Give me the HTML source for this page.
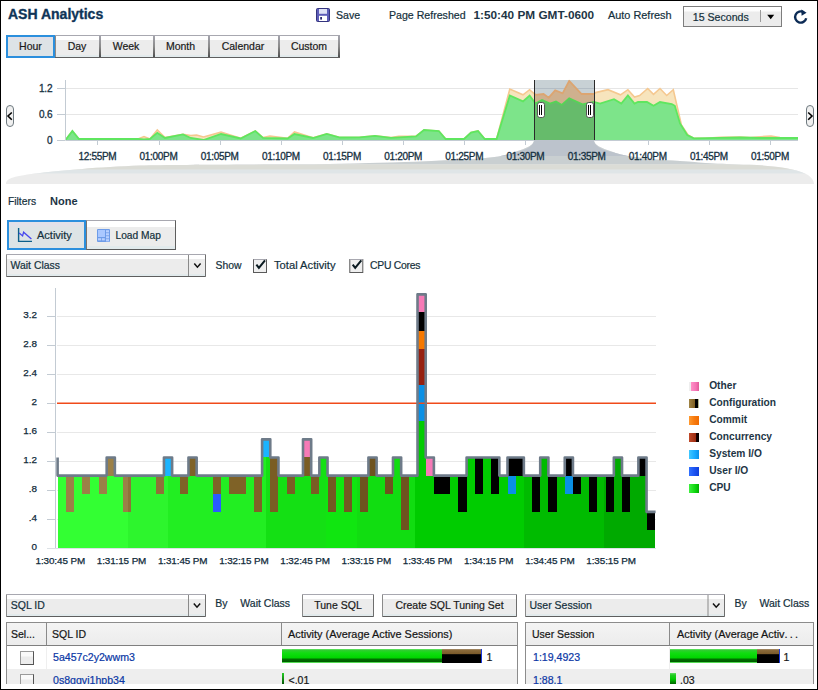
<!DOCTYPE html>
<html><head><meta charset="utf-8"><title>ASH Analytics</title>
<style>
html,body{margin:0;padding:0;background:#fff;}
body{width:818px;height:690px;position:relative;overflow:hidden;font-family:"Liberation Sans", sans-serif;}
.t{position:absolute;white-space:nowrap;line-height:normal;}
.box{position:absolute;box-sizing:content-box;}
svg.g{position:absolute;left:0;top:0;}
#frame{position:absolute;left:0;top:0;width:816px;height:688px;border:1px solid #000;pointer-events:none;}
</style></head><body>
<div class="box" style="left:683px;top:6px;width:97px;height:19px;border:1px solid #7d7d7d;background:linear-gradient(#ffffff 0,#fdfdfd 4px,#ececec 5px,#ececec 100%);"></div><div class="box" style="left:55px;top:35px;width:285px;height:21px;border-top:1px solid #a8a8b0;border-bottom:1px solid #5e5e5e;background:linear-gradient(#ffffff 0,#ffffff 4px,#ececec 4px,#ececec 19px,#e2eaec 19px,#e2eaec 100%);"></div><div class="box" style="left:6px;top:35px;width:45px;height:19px;border:2px solid #2b8fdd;background:linear-gradient(#e0dfe7 0,#e0dfe7 3px,#dde3e6 3px,#dde3e6 100%);"></div><div class="box" style="left:99px;top:36px;width:2px;height:21px;background:linear-gradient(#a4a4ac,#8a8a8a 50%,#505050)"></div><div class="box" style="left:153px;top:36px;width:2px;height:21px;background:linear-gradient(#a4a4ac,#8a8a8a 50%,#505050)"></div><div class="box" style="left:208px;top:36px;width:2px;height:21px;background:linear-gradient(#a4a4ac,#8a8a8a 50%,#505050)"></div><div class="box" style="left:278px;top:36px;width:2px;height:21px;background:linear-gradient(#a4a4ac,#8a8a8a 50%,#505050)"></div><div class="box" style="left:338px;top:36px;width:2px;height:21px;background:linear-gradient(#a4a4ac,#8a8a8a 50%,#505050)"></div><div class="box" style="left:55px;top:36px;width:1px;height:21px;background:#8f8a86"></div><div class="box" style="left:7px;top:220px;width:75px;height:26px;border:2px solid #2b8fdd;background:linear-gradient(#e1e1e9 0,#e1e1e9 4px,#dde4e6 5px,#dde4e6 100%);"></div><div class="box" style="left:86px;top:220px;width:88px;height:28px;border-top:1px solid #a8a8b0;border-left:1px solid #7a7470;border-right:1px solid #5e5e5e;border-bottom:1px solid #5a5a5a;background:linear-gradient(#ffffff 0,#ffffff 6px,#ececec 6px,#ececec 25px,#e2eaec 25px,#e2eaec 100%);"></div><div class="box" style="left:6px;top:254px;width:198px;height:21px;border:1px solid #8a8a8a;border-top-color:#a8a8b0;border-right-color:#6e6e6e;border-bottom-color:#5e5e5e;border-radius:1px;background:linear-gradient(#ffffff 0,#ffffff 4px,#ececec 4px,#ececec calc(100% - 2px),#e2eaec calc(100% - 2px));"></div><div class="box" style="left:6px;top:594px;width:198px;height:21px;border:1px solid #8a8a8a;border-top-color:#a8a8b0;border-right-color:#6e6e6e;border-bottom-color:#5e5e5e;border-radius:1px;background:linear-gradient(#ffffff 0,#ffffff 4px,#ececec 4px,#ececec calc(100% - 2px),#e2eaec calc(100% - 2px));"></div><div class="box" style="left:302px;top:594px;width:70px;height:21px;border:1px solid #8a8a8a;border-top-color:#a8a8b0;border-right-color:#6e6e6e;border-bottom-color:#5e5e5e;border-radius:1px;background:linear-gradient(#ffffff 0,#ffffff 4px,#ececec 4px,#ececec calc(100% - 2px),#e2eaec calc(100% - 2px));"></div><div class="box" style="left:382px;top:594px;width:133px;height:21px;border:1px solid #8a8a8a;border-top-color:#a8a8b0;border-right-color:#6e6e6e;border-bottom-color:#5e5e5e;border-radius:1px;background:linear-gradient(#ffffff 0,#ffffff 4px,#ececec 4px,#ececec calc(100% - 2px),#e2eaec calc(100% - 2px));"></div><div class="box" style="left:525px;top:594px;width:198px;height:21px;border:1px solid #8a8a8a;border-top-color:#a8a8b0;border-right-color:#6e6e6e;border-bottom-color:#5e5e5e;border-radius:1px;background:linear-gradient(#ffffff 0,#ffffff 4px,#ececec 4px,#ececec calc(100% - 2px),#e2eaec calc(100% - 2px));"></div>
<svg class="g" width="818" height="690" viewBox="0 0 818 690" shape-rendering="auto">
<defs><linearGradient id="lg0" x1="0" x2="1" y1="0" y2="0"><stop offset="0" stop-color="#eeeeee"/><stop offset="0.2" stop-color="#eeeeee"/><stop offset="0.2" stop-color="#ff90c8"/><stop offset="0.7" stop-color="#f474b4"/><stop offset="1" stop-color="#e05a98"/></linearGradient><linearGradient id="lg1" x1="0" x2="1" y1="0" y2="0"><stop offset="0" stop-color="#a08444"/><stop offset="0.6" stop-color="#7e5e22"/><stop offset="0.6" stop-color="#000"/><stop offset="0.9" stop-color="#000"/><stop offset="0.9" stop-color="#b8b890"/><stop offset="1" stop-color="#b8b890"/></linearGradient><linearGradient id="lg2" x1="0" x2="1" y1="0" y2="0"><stop offset="0" stop-color="#ff9a30"/><stop offset="0.5" stop-color="#f77c10"/><stop offset="1" stop-color="#f06a00"/></linearGradient><linearGradient id="lg3" x1="0" x2="1" y1="0" y2="0"><stop offset="0" stop-color="#c04a2a"/><stop offset="0.7" stop-color="#9a2a10"/><stop offset="0.7" stop-color="#200000"/><stop offset="1" stop-color="#000"/></linearGradient><linearGradient id="lg4" x1="0" x2="1" y1="0" y2="0"><stop offset="0" stop-color="#40c8ff"/><stop offset="0.6" stop-color="#18aaff"/><stop offset="1" stop-color="#0a90e8"/></linearGradient><linearGradient id="lg5" x1="0" x2="1" y1="0" y2="0"><stop offset="0" stop-color="#3070ff"/><stop offset="0.6" stop-color="#1a50f0"/><stop offset="1" stop-color="#1040d8"/></linearGradient><linearGradient id="lg6" x1="0" x2="1" y1="0" y2="0"><stop offset="0" stop-color="#40f040"/><stop offset="0.6" stop-color="#10d810"/><stop offset="1" stop-color="#00b000"/></linearGradient></defs><g>
<rect x="316.5" y="8.5" width="13" height="13" rx="1" fill="#5d5db8" stroke="#34347e" stroke-width="1"/>
<rect x="319" y="9" width="8" height="4.8" fill="#dfe2f6"/>
<rect x="319" y="15.8" width="8" height="5.2" fill="#ffffff"/>
<rect x="320.2" y="17" width="1.8" height="2.6" fill="#2a2a70"/>
</g><line x1="760.5" y1="10" x2="760.5" y2="22" stroke="#9a9a9a" stroke-width="1" /><path d="M767.2 14.8 L774.2 14.8 L770.7 19.2 Z" fill="#000"/><path d="M 806.2 18.2 A 5.6 5.6 0 1 1 803.8 12.3" fill="none" stroke="#0c2b55" stroke-width="2.4"/><path d="M 801.3 9.6 L 806.6 12.8 L 801.6 15.8 Z" fill="#0c2b55"/><line x1="65.5" y1="88.5" x2="798" y2="88.5" stroke="#e6e6e6" stroke-width="1" /><line x1="65.5" y1="114.5" x2="798" y2="114.5" stroke="#e6e6e6" stroke-width="1" /><line x1="57" y1="88.5" x2="65" y2="88.5" stroke="#c3cbd3" stroke-width="1" /><line x1="57" y1="114.5" x2="65" y2="114.5" stroke="#c3cbd3" stroke-width="1" /><line x1="57" y1="140.5" x2="65" y2="140.5" stroke="#c3cbd3" stroke-width="1" /><line x1="97.5" y1="140" x2="97.5" y2="145" stroke="#c3cbd3" stroke-width="1" /><line x1="159.5" y1="140" x2="159.5" y2="145" stroke="#c3cbd3" stroke-width="1" /><line x1="220.5" y1="140" x2="220.5" y2="145" stroke="#c3cbd3" stroke-width="1" /><line x1="281.5" y1="140" x2="281.5" y2="145" stroke="#c3cbd3" stroke-width="1" /><line x1="342.5" y1="140" x2="342.5" y2="145" stroke="#c3cbd3" stroke-width="1" /><line x1="403.5" y1="140" x2="403.5" y2="145" stroke="#c3cbd3" stroke-width="1" /><line x1="464.5" y1="140" x2="464.5" y2="145" stroke="#c3cbd3" stroke-width="1" /><line x1="525.5" y1="140" x2="525.5" y2="145" stroke="#c3cbd3" stroke-width="1" /><line x1="587.5" y1="140" x2="587.5" y2="145" stroke="#c3cbd3" stroke-width="1" /><line x1="648.5" y1="140" x2="648.5" y2="145" stroke="#c3cbd3" stroke-width="1" /><line x1="709.5" y1="140" x2="709.5" y2="145" stroke="#c3cbd3" stroke-width="1" /><line x1="770.5" y1="140" x2="770.5" y2="145" stroke="#c3cbd3" stroke-width="1" /><path d="M65.5 140.0 L72.4 131.0 L79.0 139.5 L138.0 139.0 L144.0 136.5 L150.0 139.0 L157.3 130.0 L165.0 137.5 L183.0 134.4 L190.8 135.5 L196.6 135.0 L203.5 137.0 L221.0 132.2 L240.7 138.2 L255.3 131.0 L263.0 137.5 L270.0 136.0 L287.6 138.3 L294.5 132.0 L313.0 137.8 L326.8 133.8 L340.0 137.5 L359.6 137.4 L375.0 135.8 L391.0 137.6 L398.7 136.4 L416.0 136.2 L424.0 130.0 L438.8 131.0 L445.7 139.0 L464.0 139.0 L471.0 132.5 L478.0 131.0 L484.8 139.0 L496.6 139.0 L509.8 89.0 L523.0 94.8 L529.6 89.7 L535.5 94.8 L543.5 94.0 L548.7 97.7 L555.2 90.4 L562.6 93.3 L569.2 80.9 L581.6 94.0 L594.0 94.0 L595.6 92.6 L608.0 89.7 L620.5 94.8 L627.9 89.7 L634.5 97.0 L639.6 95.5 L647.7 88.5 L653.5 94.4 L660.0 88.5 L666.7 95.5 L673.3 89.7 L676.0 101.4 L681.4 125.0 L688.0 135.0 L693.8 138.3 L705.6 138.3 L720.0 137.3 L740.0 137.0 L750.0 137.5 L771.0 136.0 L780.0 137.5 L798.0 138.0 L798.0 140 L65.5 140 Z" fill="#f7e4bd"/><path d="M65.5 140.0 L72.4 131.0 L79.0 139.5 L138.0 139.0 L144.0 136.5 L150.0 139.0 L157.3 130.0 L165.0 137.5 L183.0 134.4 L190.8 135.5 L196.6 135.0 L203.5 137.0 L221.0 132.2 L240.7 138.2 L255.3 131.0 L263.0 137.5 L270.0 136.0 L287.6 138.3 L294.5 132.0 L313.0 137.8 L326.8 133.8 L340.0 137.5 L359.6 137.4 L375.0 135.8 L391.0 137.6 L398.7 136.4 L416.0 136.2 L424.0 130.0 L438.8 131.0 L445.7 139.0 L464.0 139.0 L471.0 132.5 L478.0 131.0 L484.8 139.0 L496.6 139.0 L509.8 89.0 L523.0 94.8 L529.6 89.7 L535.5 94.8 L543.5 94.0 L548.7 97.7 L555.2 90.4 L562.6 93.3 L569.2 80.9 L581.6 94.0 L594.0 94.0 L595.6 92.6 L608.0 89.7 L620.5 94.8 L627.9 89.7 L634.5 97.0 L639.6 95.5 L647.7 88.5 L653.5 94.4 L660.0 88.5 L666.7 95.5 L673.3 89.7 L676.0 101.4 L681.4 125.0 L688.0 135.0 L693.8 138.3 L705.6 138.3 L720.0 137.3 L740.0 137.0 L750.0 137.5 L771.0 136.0 L780.0 137.5 L798.0 138.0" fill="none" stroke="#f5c890" stroke-width="1.6"/><path d="M65.5 140.0 L72.4 131.0 L79.0 139.0 L138.0 139.0 L144.0 139.5 L150.0 139.0 L157.3 132.8 L165.0 138.0 L183.0 134.4 L190.8 138.0 L203.5 140.0 L221.0 134.0 L240.7 138.5 L255.3 131.0 L263.0 137.9 L287.6 138.5 L294.5 134.0 L313.0 138.0 L326.8 134.0 L340.0 137.5 L359.6 137.4 L375.0 135.8 L391.0 137.8 L416.0 136.4 L424.0 130.0 L438.8 131.0 L445.7 139.0 L464.0 139.0 L471.0 132.5 L478.0 131.0 L484.8 139.0 L496.6 139.0 L509.8 95.5 L523.0 101.4 L529.6 95.5 L535.5 103.6 L542.0 100.0 L550.0 103.6 L556.0 101.4 L561.8 105.0 L569.2 98.2 L582.4 104.3 L594.0 102.0 L600.0 103.6 L614.0 99.2 L621.3 103.6 L627.9 95.5 L634.5 103.6 L638.0 102.0 L647.0 102.0 L653.5 105.8 L660.0 102.0 L671.8 104.0 L674.8 105.8 L680.0 123.4 L687.2 135.0 L693.8 138.3 L720.0 137.8 L740.0 137.5 L760.0 138.0 L798.0 138.0 L798.0 140 L65.5 140 Z" fill="#7de48a"/><path d="M65.5 140.0 L72.4 131.0 L79.0 139.0 L138.0 139.0 L144.0 139.5 L150.0 139.0 L157.3 132.8 L165.0 138.0 L183.0 134.4 L190.8 138.0 L203.5 140.0 L221.0 134.0 L240.7 138.5 L255.3 131.0 L263.0 137.9 L287.6 138.5 L294.5 134.0 L313.0 138.0 L326.8 134.0 L340.0 137.5 L359.6 137.4 L375.0 135.8 L391.0 137.8 L416.0 136.4 L424.0 130.0 L438.8 131.0 L445.7 139.0 L464.0 139.0 L471.0 132.5 L478.0 131.0 L484.8 139.0 L496.6 139.0 L509.8 95.5 L523.0 101.4 L529.6 95.5 L535.5 103.6 L542.0 100.0 L550.0 103.6 L556.0 101.4 L561.8 105.0 L569.2 98.2 L582.4 104.3 L594.0 102.0 L600.0 103.6 L614.0 99.2 L621.3 103.6 L627.9 95.5 L634.5 103.6 L638.0 102.0 L647.0 102.0 L653.5 105.8 L660.0 102.0 L671.8 104.0 L674.8 105.8 L680.0 123.4 L687.2 135.0 L693.8 138.3 L720.0 137.8 L740.0 137.5 L760.0 138.0 L798.0 138.0" fill="none" stroke="#5fe65f" stroke-width="1.8"/><line x1="65.5" y1="140.5" x2="798" y2="140.5" stroke="#c3cbd3" stroke-width="1" /><line x1="65.5" y1="80" x2="65.5" y2="140" stroke="#c3cbd3" stroke-width="1" /><clipPath id="lensclip"><path d="M6 184 C 6 178, 14 176, 40 173 C 60 170.5, 100 167, 140 165.5 C 170 164.8, 220 164.5, 300 164.3 C 380 163.5, 440 161, 480 158.5 C 500 157, 510 154, 515 152 C 527 148, 534 145, 534 140 L 594 140 C 594 145, 601 148, 613 152 C 620 155, 640 159, 680 161 C 700 162.5, 715 164, 750 164.8 C 780 166, 800 170, 808 175 C 812 178, 814 181, 814 184 Z"/></clipPath><g clip-path="url(#lensclip)"><rect x="0" y="138" width="818" height="50" fill="#ececec"/><rect x="0" y="138" width="818" height="26.5" fill="#c9cfd1"/><rect x="0" y="164.5" width="818" height="5.2" fill="#dbdcd6"/><rect x="0" y="169.7" width="818" height="3.8" fill="#dfe5e7"/><path d="M470 156 C 505 155, 522 152, 528 148 C 533 145, 534 142, 534 140 L 594 140 C 594 142, 595 145, 600 148 C 606 152, 623 155, 658 156 Z" fill="#bcc3cc"/></g><clipPath id="selclip"><rect x="534.5" y="80" width="60" height="60"/></clipPath><g clip-path="url(#selclip)"><rect x="534" y="80" width="61" height="60" fill="#c8d1d5"/><line x1="534" y1="88.5" x2="595" y2="88.5" stroke="#b3bdc5"/><line x1="534" y1="114.5" x2="595" y2="114.5" stroke="#b3bdc5"/><path d="M65.5 140.0 L72.4 131.0 L79.0 139.5 L138.0 139.0 L144.0 136.5 L150.0 139.0 L157.3 130.0 L165.0 137.5 L183.0 134.4 L190.8 135.5 L196.6 135.0 L203.5 137.0 L221.0 132.2 L240.7 138.2 L255.3 131.0 L263.0 137.5 L270.0 136.0 L287.6 138.3 L294.5 132.0 L313.0 137.8 L326.8 133.8 L340.0 137.5 L359.6 137.4 L375.0 135.8 L391.0 137.6 L398.7 136.4 L416.0 136.2 L424.0 130.0 L438.8 131.0 L445.7 139.0 L464.0 139.0 L471.0 132.5 L478.0 131.0 L484.8 139.0 L496.6 139.0 L509.8 89.0 L523.0 94.8 L529.6 89.7 L535.5 94.8 L543.5 94.0 L548.7 97.7 L555.2 90.4 L562.6 93.3 L569.2 80.9 L581.6 94.0 L594.0 94.0 L595.6 92.6 L608.0 89.7 L620.5 94.8 L627.9 89.7 L634.5 97.0 L639.6 95.5 L647.7 88.5 L653.5 94.4 L660.0 88.5 L666.7 95.5 L673.3 89.7 L676.0 101.4 L681.4 125.0 L688.0 135.0 L693.8 138.3 L705.6 138.3 L720.0 137.3 L740.0 137.0 L750.0 137.5 L771.0 136.0 L780.0 137.5 L798.0 138.0 L798.0 140 L65.5 140 Z" fill="#cfb08e"/><path d="M65.5 140.0 L72.4 131.0 L79.0 139.5 L138.0 139.0 L144.0 136.5 L150.0 139.0 L157.3 130.0 L165.0 137.5 L183.0 134.4 L190.8 135.5 L196.6 135.0 L203.5 137.0 L221.0 132.2 L240.7 138.2 L255.3 131.0 L263.0 137.5 L270.0 136.0 L287.6 138.3 L294.5 132.0 L313.0 137.8 L326.8 133.8 L340.0 137.5 L359.6 137.4 L375.0 135.8 L391.0 137.6 L398.7 136.4 L416.0 136.2 L424.0 130.0 L438.8 131.0 L445.7 139.0 L464.0 139.0 L471.0 132.5 L478.0 131.0 L484.8 139.0 L496.6 139.0 L509.8 89.0 L523.0 94.8 L529.6 89.7 L535.5 94.8 L543.5 94.0 L548.7 97.7 L555.2 90.4 L562.6 93.3 L569.2 80.9 L581.6 94.0 L594.0 94.0 L595.6 92.6 L608.0 89.7 L620.5 94.8 L627.9 89.7 L634.5 97.0 L639.6 95.5 L647.7 88.5 L653.5 94.4 L660.0 88.5 L666.7 95.5 L673.3 89.7 L676.0 101.4 L681.4 125.0 L688.0 135.0 L693.8 138.3 L705.6 138.3 L720.0 137.3 L740.0 137.0 L750.0 137.5 L771.0 136.0 L780.0 137.5 L798.0 138.0" fill="none" stroke="#dca571" stroke-width="1.8"/><path d="M65.5 140.0 L72.4 131.0 L79.0 139.0 L138.0 139.0 L144.0 139.5 L150.0 139.0 L157.3 132.8 L165.0 138.0 L183.0 134.4 L190.8 138.0 L203.5 140.0 L221.0 134.0 L240.7 138.5 L255.3 131.0 L263.0 137.9 L287.6 138.5 L294.5 134.0 L313.0 138.0 L326.8 134.0 L340.0 137.5 L359.6 137.4 L375.0 135.8 L391.0 137.8 L416.0 136.4 L424.0 130.0 L438.8 131.0 L445.7 139.0 L464.0 139.0 L471.0 132.5 L478.0 131.0 L484.8 139.0 L496.6 139.0 L509.8 95.5 L523.0 101.4 L529.6 95.5 L535.5 103.6 L542.0 100.0 L550.0 103.6 L556.0 101.4 L561.8 105.0 L569.2 98.2 L582.4 104.3 L594.0 102.0 L600.0 103.6 L614.0 99.2 L621.3 103.6 L627.9 95.5 L634.5 103.6 L638.0 102.0 L647.0 102.0 L653.5 105.8 L660.0 102.0 L671.8 104.0 L674.8 105.8 L680.0 123.4 L687.2 135.0 L693.8 138.3 L720.0 137.8 L740.0 137.5 L760.0 138.0 L798.0 138.0 L798.0 140 L65.5 140 Z" fill="#66bb6b"/><path d="M65.5 140.0 L72.4 131.0 L79.0 139.0 L138.0 139.0 L144.0 139.5 L150.0 139.0 L157.3 132.8 L165.0 138.0 L183.0 134.4 L190.8 138.0 L203.5 140.0 L221.0 134.0 L240.7 138.5 L255.3 131.0 L263.0 137.9 L287.6 138.5 L294.5 134.0 L313.0 138.0 L326.8 134.0 L340.0 137.5 L359.6 137.4 L375.0 135.8 L391.0 137.8 L416.0 136.4 L424.0 130.0 L438.8 131.0 L445.7 139.0 L464.0 139.0 L471.0 132.5 L478.0 131.0 L484.8 139.0 L496.6 139.0 L509.8 95.5 L523.0 101.4 L529.6 95.5 L535.5 103.6 L542.0 100.0 L550.0 103.6 L556.0 101.4 L561.8 105.0 L569.2 98.2 L582.4 104.3 L594.0 102.0 L600.0 103.6 L614.0 99.2 L621.3 103.6 L627.9 95.5 L634.5 103.6 L638.0 102.0 L647.0 102.0 L653.5 105.8 L660.0 102.0 L671.8 104.0 L674.8 105.8 L680.0 123.4 L687.2 135.0 L693.8 138.3 L720.0 137.8 L740.0 137.5 L760.0 138.0 L798.0 138.0" fill="none" stroke="#55d455" stroke-width="1.8"/></g><line x1="534.5" y1="80" x2="534.5" y2="140" stroke="#2a2a2a" stroke-width="1" /><line x1="594.5" y1="80" x2="594.5" y2="140" stroke="#2a2a2a" stroke-width="1" /><rect x="537.5" y="102.5" width="7" height="15" rx="2.2" fill="#fff" stroke="#555" stroke-width="1"/><rect x="539" y="105" width="1" height="10" fill="#000" shape-rendering="crispEdges"/><rect x="541" y="105" width="1" height="10" fill="#000" shape-rendering="crispEdges"/><rect x="586.5" y="102.5" width="7" height="15" rx="2.2" fill="#fff" stroke="#555" stroke-width="1"/><rect x="588" y="105" width="1" height="10" fill="#000" shape-rendering="crispEdges"/><rect x="590" y="105" width="1" height="10" fill="#000" shape-rendering="crispEdges"/><rect x="6.5" y="105.5" width="7" height="21" rx="3.5" fill="#f0f0f0" stroke="#6f7a80" stroke-width="1"/><path d="M11.8 112.5 L8 116 L11.8 119.8" fill="none" stroke="#000" stroke-width="1.6"/><rect x="806.5" y="105.5" width="7" height="21" rx="3.5" fill="#f0f0f0" stroke="#6f7a80" stroke-width="1"/><path d="M808.2 112.5 L812 116 L808.2 119.8" fill="none" stroke="#000" stroke-width="1.6"/><path d="M18.6 228 L18.6 241.4 L32 241.4" fill="none" stroke="#0d5f8a" stroke-width="1.4"/><path d="M19.2 233.1 L22.6 235.9 L23.6 232.2 L31.4 239" fill="none" stroke="#4646ee" stroke-width="1.3"/><rect x="97" y="229" width="13" height="13" rx="1" fill="#6e9ce8"/><rect x="98" y="230" width="7" height="7" fill="#aac8ff"/><rect x="106" y="230.2" width="3" height="2.2" fill="#b8d0ff" /><rect x="106" y="233.2" width="3" height="2.2" fill="#b8d0ff" /><rect x="106" y="236.2" width="3" height="2.2" fill="#b8d0ff" /><rect x="106" y="239.2" width="3" height="2.2" fill="#b8d0ff" /><rect x="98" y="238.2" width="3" height="2.2" fill="#b8d0ff" /><rect x="101.8" y="238.2" width="3" height="2.2" fill="#b8d0ff" /><line x1="188.5" y1="255" x2="188.5" y2="276" stroke="#8a8a8a" stroke-width="1" /><path d="M194.3 263.6 L197.4 267.2 L200.6 263.6" fill="none" stroke="#111" stroke-width="1.5"/><rect x="253.5" y="259.5" width="13" height="13" fill="#efefef" stroke="#5a5a5a" stroke-width="1"/><path d="M253.5 259.5 L266.5 259.5" stroke="#a8a8b0" stroke-width="1"/><path d="M256.4 264.6 L258.9 267.9 L265 260.4" fill="none" stroke="#0a1a20" stroke-width="2"/><rect x="349.8" y="259.5" width="13" height="13" fill="#efefef" stroke="#5a5a5a" stroke-width="1"/><path d="M349.8 259.5 L362.8 259.5" stroke="#a8a8b0" stroke-width="1"/><path d="M352.7 264.6 L355.2 267.9 L361.3 260.4" fill="none" stroke="#0a1a20" stroke-width="2"/><line x1="57" y1="519.5" x2="656" y2="519.5" stroke="#e8e8e8" stroke-width="1" /><line x1="57" y1="490.5" x2="656" y2="490.5" stroke="#e8e8e8" stroke-width="1" /><line x1="57" y1="461.5" x2="656" y2="461.5" stroke="#e8e8e8" stroke-width="1" /><line x1="57" y1="432.5" x2="656" y2="432.5" stroke="#e8e8e8" stroke-width="1" /><line x1="57" y1="403.5" x2="656" y2="403.5" stroke="#e8e8e8" stroke-width="1" /><line x1="57" y1="374.5" x2="656" y2="374.5" stroke="#e8e8e8" stroke-width="1" /><line x1="57" y1="345.5" x2="656" y2="345.5" stroke="#e8e8e8" stroke-width="1" /><line x1="57" y1="316.5" x2="656" y2="316.5" stroke="#e8e8e8" stroke-width="1" /><line x1="47" y1="548.5" x2="55" y2="548.5" stroke="#c3cbd3" stroke-width="1" /><line x1="47" y1="519.5" x2="55" y2="519.5" stroke="#c3cbd3" stroke-width="1" /><line x1="47" y1="490.5" x2="55" y2="490.5" stroke="#c3cbd3" stroke-width="1" /><line x1="47" y1="461.5" x2="55" y2="461.5" stroke="#c3cbd3" stroke-width="1" /><line x1="47" y1="432.5" x2="55" y2="432.5" stroke="#c3cbd3" stroke-width="1" /><line x1="47" y1="403.5" x2="55" y2="403.5" stroke="#c3cbd3" stroke-width="1" /><line x1="47" y1="374.5" x2="55" y2="374.5" stroke="#c3cbd3" stroke-width="1" /><line x1="47" y1="345.5" x2="55" y2="345.5" stroke="#c3cbd3" stroke-width="1" /><line x1="47" y1="316.5" x2="55" y2="316.5" stroke="#c3cbd3" stroke-width="1" /><line x1="55.5" y1="288" x2="55.5" y2="548" stroke="#c3cbd3" stroke-width="1" /><line x1="47" y1="548.5" x2="656" y2="548.5" stroke="#dde2e6" stroke-width="1" /><g shape-rendering="crispEdges"><rect x="57.60" y="475.60" width="8.18" height="72.50" fill="#33ff33"/><rect x="65.78" y="511.85" width="8.18" height="36.25" fill="#33ff33"/><rect x="65.78" y="475.60" width="8.18" height="36.25" fill="#9b8047"/><rect x="73.96" y="475.60" width="8.18" height="72.50" fill="#33ff33"/><rect x="82.14" y="493.73" width="8.18" height="54.38" fill="#33ff33"/><rect x="82.14" y="475.60" width="8.18" height="18.12" fill="#9b8047"/><rect x="90.32" y="475.60" width="8.18" height="72.50" fill="#33ff33"/><rect x="98.50" y="493.73" width="8.18" height="54.38" fill="#33ff33"/><rect x="98.50" y="475.60" width="8.18" height="18.12" fill="#9b8047"/><rect x="106.68" y="475.60" width="8.18" height="72.50" fill="#33ff33"/><rect x="106.68" y="457.48" width="8.18" height="18.12" fill="#9b8047"/><rect x="114.86" y="475.60" width="8.18" height="72.50" fill="#33ff33"/><rect x="123.04" y="511.85" width="5.26" height="36.25" fill="#33ff33"/><rect x="128.30" y="511.85" width="2.92" height="36.25" fill="#2df52d"/><rect x="123.04" y="475.60" width="5.26" height="36.25" fill="#9b8047"/><rect x="128.30" y="475.60" width="2.92" height="36.25" fill="#8f7139"/><rect x="131.22" y="475.60" width="8.18" height="72.50" fill="#2df52d"/><rect x="139.40" y="475.60" width="8.18" height="72.50" fill="#2df52d"/><rect x="147.58" y="475.60" width="8.18" height="72.50" fill="#2df52d"/><rect x="155.76" y="493.73" width="8.18" height="54.38" fill="#2df52d"/><rect x="155.76" y="475.60" width="8.18" height="18.12" fill="#8f7139"/><rect x="163.94" y="475.60" width="4.26" height="72.50" fill="#2df52d"/><rect x="168.20" y="475.60" width="3.92" height="72.50" fill="#22ee22"/><rect x="163.94" y="457.48" width="8.18" height="18.12" fill="#1ab4ff"/><rect x="172.12" y="475.60" width="8.18" height="72.50" fill="#22ee22"/><rect x="180.30" y="493.73" width="8.18" height="54.38" fill="#22ee22"/><rect x="180.30" y="475.60" width="8.18" height="18.12" fill="#7f6227"/><rect x="188.48" y="475.60" width="8.18" height="72.50" fill="#22ee22"/><rect x="188.48" y="457.48" width="8.18" height="18.12" fill="#7f6227"/><rect x="196.66" y="475.60" width="8.18" height="72.50" fill="#22ee22"/><rect x="204.84" y="475.60" width="8.18" height="72.50" fill="#22ee22"/><rect x="213.02" y="511.85" width="8.18" height="36.25" fill="#22ee22"/><rect x="213.02" y="493.73" width="8.18" height="18.12" fill="#2a5cff"/><rect x="213.02" y="475.60" width="8.18" height="18.12" fill="#7f6227"/><rect x="221.20" y="475.60" width="8.18" height="72.50" fill="#22ee22"/><rect x="229.38" y="493.73" width="8.18" height="54.38" fill="#22ee22"/><rect x="229.38" y="475.60" width="8.18" height="18.12" fill="#7f6227"/><rect x="237.56" y="493.73" width="8.18" height="54.38" fill="#22ee22"/><rect x="237.56" y="475.60" width="8.18" height="18.12" fill="#7f6227"/><rect x="245.74" y="475.60" width="8.18" height="72.50" fill="#22ee22"/><rect x="253.92" y="511.85" width="8.18" height="36.25" fill="#22ee22"/><rect x="253.92" y="475.60" width="8.18" height="36.25" fill="#7f6227"/><rect x="262.10" y="457.48" width="4.20" height="90.62" fill="#22ee22"/><rect x="266.30" y="457.48" width="3.98" height="90.62" fill="#14e014"/><rect x="262.10" y="439.35" width="8.18" height="18.12" fill="#1ab4ff"/><rect x="270.28" y="511.85" width="8.18" height="36.25" fill="#14e014"/><rect x="270.28" y="457.48" width="8.18" height="54.38" fill="#7a5d24"/><rect x="278.46" y="475.60" width="8.18" height="72.50" fill="#14e014"/><rect x="286.64" y="493.73" width="8.18" height="54.38" fill="#14e014"/><rect x="286.64" y="475.60" width="8.18" height="18.12" fill="#7a5d24"/><rect x="294.82" y="475.60" width="8.18" height="72.50" fill="#14e014"/><rect x="303.00" y="475.60" width="8.18" height="72.50" fill="#14e014"/><rect x="303.00" y="457.48" width="8.18" height="18.12" fill="#7a5d24"/><rect x="303.00" y="439.35" width="8.18" height="18.12" fill="#f67ab6"/><rect x="311.18" y="493.73" width="8.18" height="54.38" fill="#14e014"/><rect x="311.18" y="475.60" width="8.18" height="18.12" fill="#7a5d24"/><rect x="319.36" y="457.48" width="6.54" height="90.62" fill="#14e014"/><rect x="325.90" y="457.48" width="1.64" height="90.62" fill="#10e610"/><rect x="327.54" y="511.85" width="8.18" height="36.25" fill="#10e610"/><rect x="327.54" y="475.60" width="8.18" height="36.25" fill="#735822"/><rect x="335.72" y="475.60" width="8.18" height="72.50" fill="#10e610"/><rect x="343.90" y="511.85" width="8.18" height="36.25" fill="#10e610"/><rect x="343.90" y="475.60" width="8.18" height="36.25" fill="#735822"/><rect x="352.08" y="475.60" width="4.52" height="72.50" fill="#10e610"/><rect x="356.60" y="475.60" width="3.66" height="72.50" fill="#11dd11"/><rect x="360.26" y="511.85" width="8.18" height="36.25" fill="#11dd11"/><rect x="360.26" y="475.60" width="8.18" height="36.25" fill="#6e531f"/><rect x="368.44" y="475.60" width="8.18" height="72.50" fill="#11dd11"/><rect x="368.44" y="457.48" width="8.18" height="18.12" fill="#6e531f"/><rect x="376.62" y="475.60" width="8.18" height="72.50" fill="#11dd11"/><rect x="384.80" y="493.73" width="8.18" height="54.38" fill="#11dd11"/><rect x="384.80" y="475.60" width="8.18" height="18.12" fill="#6e531f"/><rect x="392.98" y="457.48" width="8.18" height="90.62" fill="#11dd11"/><rect x="401.16" y="529.98" width="8.18" height="18.12" fill="#11dd11"/><rect x="401.16" y="475.60" width="8.18" height="54.38" fill="#6e531f"/><rect x="409.34" y="475.60" width="5.46" height="72.50" fill="#11dd11"/><rect x="414.80" y="475.60" width="2.72" height="72.50" fill="#00cc00"/><rect x="417.52" y="421.23" width="8.18" height="126.88" fill="#00cc00"/><rect x="417.52" y="384.98" width="8.18" height="36.25" fill="#0a90e6"/><rect x="417.52" y="348.73" width="8.18" height="36.25" fill="#962010"/><rect x="417.52" y="330.60" width="8.18" height="18.12" fill="#f57800"/><rect x="417.52" y="312.48" width="8.18" height="18.12" fill="#000000"/><rect x="417.52" y="294.35" width="8.18" height="18.12" fill="#f67ab6"/><rect x="425.70" y="475.60" width="8.18" height="72.50" fill="#00cc00"/><rect x="425.70" y="457.48" width="8.18" height="18.12" fill="#f67ab6"/><rect x="433.88" y="493.73" width="8.18" height="54.38" fill="#00cc00"/><rect x="433.88" y="475.60" width="8.18" height="18.12" fill="#000000"/><rect x="442.06" y="493.73" width="8.18" height="54.38" fill="#00cc00"/><rect x="442.06" y="475.60" width="8.18" height="18.12" fill="#000000"/><rect x="450.24" y="475.60" width="8.18" height="72.50" fill="#00cc00"/><rect x="458.42" y="511.85" width="8.18" height="36.25" fill="#00cc00"/><rect x="458.42" y="475.60" width="8.18" height="36.25" fill="#000000"/><rect x="466.60" y="457.48" width="8.18" height="90.62" fill="#00cc00"/><rect x="474.78" y="493.73" width="8.18" height="54.38" fill="#00cc00"/><rect x="474.78" y="457.48" width="8.18" height="36.25" fill="#000000"/><rect x="482.96" y="457.48" width="8.18" height="90.62" fill="#00cc00"/><rect x="491.14" y="493.73" width="8.18" height="54.38" fill="#00cc00"/><rect x="491.14" y="457.48" width="8.18" height="36.25" fill="#000000"/><rect x="499.32" y="475.60" width="8.18" height="72.50" fill="#00cc00"/><rect x="507.50" y="493.73" width="8.18" height="54.38" fill="#00cc00"/><rect x="507.50" y="475.60" width="8.18" height="18.12" fill="#0a90e6"/><rect x="507.50" y="457.48" width="8.18" height="18.12" fill="#000000"/><rect x="515.68" y="475.60" width="8.18" height="72.50" fill="#00cc00"/><rect x="515.68" y="457.48" width="8.18" height="18.12" fill="#000000"/><rect x="523.86" y="475.60" width="0.14" height="72.50" fill="#00cc00"/><rect x="524.00" y="475.60" width="8.04" height="72.50" fill="#00bb00"/><rect x="532.04" y="511.85" width="8.18" height="36.25" fill="#00bb00"/><rect x="532.04" y="475.60" width="8.18" height="36.25" fill="#000000"/><rect x="540.22" y="457.48" width="8.18" height="90.62" fill="#00bb00"/><rect x="548.40" y="511.85" width="8.18" height="36.25" fill="#00bb00"/><rect x="548.40" y="475.60" width="8.18" height="36.25" fill="#000000"/><rect x="556.58" y="475.60" width="8.18" height="72.50" fill="#00bb00"/><rect x="564.76" y="493.73" width="8.18" height="54.38" fill="#00bb00"/><rect x="564.76" y="475.60" width="8.18" height="18.12" fill="#0a90e6"/><rect x="564.76" y="457.48" width="8.18" height="18.12" fill="#000000"/><rect x="572.94" y="493.73" width="8.18" height="54.38" fill="#00bb00"/><rect x="572.94" y="475.60" width="8.18" height="18.12" fill="#000000"/><rect x="581.12" y="475.60" width="8.18" height="72.50" fill="#00bb00"/><rect x="589.30" y="511.85" width="8.18" height="36.25" fill="#00bb00"/><rect x="589.30" y="475.60" width="8.18" height="36.25" fill="#000000"/><rect x="597.48" y="475.60" width="6.72" height="72.50" fill="#00bb00"/><rect x="604.20" y="475.60" width="1.46" height="72.50" fill="#00aa00"/><rect x="605.66" y="511.85" width="8.18" height="36.25" fill="#00aa00"/><rect x="605.66" y="475.60" width="8.18" height="36.25" fill="#000000"/><rect x="613.84" y="457.48" width="8.18" height="90.62" fill="#00aa00"/><rect x="622.02" y="511.85" width="8.18" height="36.25" fill="#00aa00"/><rect x="622.02" y="475.60" width="8.18" height="36.25" fill="#000000"/><rect x="630.20" y="475.60" width="8.18" height="72.50" fill="#00aa00"/><rect x="638.38" y="475.60" width="8.18" height="72.50" fill="#00aa00"/><rect x="638.38" y="457.48" width="8.18" height="18.12" fill="#000000"/><rect x="646.56" y="529.98" width="8.18" height="18.12" fill="#00aa00"/><rect x="646.56" y="511.85" width="8.18" height="18.12" fill="#000000"/></g><line x1="57" y1="403.3" x2="656" y2="403.3" stroke="#f04a1a" stroke-width="1.4" /><path d="M57.60 457.48 L57.60 475.60 L65.78 475.60 L65.78 475.60 L73.96 475.60 L73.96 475.60 L82.14 475.60 L82.14 475.60 L90.32 475.60 L90.32 475.60 L98.50 475.60 L98.50 475.60 L106.68 475.60 L106.68 457.48 L114.86 457.48 L114.86 475.60 L123.04 475.60 L123.04 475.60 L131.22 475.60 L131.22 475.60 L139.40 475.60 L139.40 475.60 L147.58 475.60 L147.58 475.60 L155.76 475.60 L155.76 475.60 L163.94 475.60 L163.94 457.48 L172.12 457.48 L172.12 475.60 L180.30 475.60 L180.30 475.60 L188.48 475.60 L188.48 457.48 L196.66 457.48 L196.66 475.60 L204.84 475.60 L204.84 475.60 L213.02 475.60 L213.02 475.60 L221.20 475.60 L221.20 475.60 L229.38 475.60 L229.38 475.60 L237.56 475.60 L237.56 475.60 L245.74 475.60 L245.74 475.60 L253.92 475.60 L253.92 475.60 L262.10 475.60 L262.10 439.35 L270.28 439.35 L270.28 457.48 L278.46 457.48 L278.46 475.60 L286.64 475.60 L286.64 475.60 L294.82 475.60 L294.82 475.60 L303.00 475.60 L303.00 439.35 L311.18 439.35 L311.18 475.60 L319.36 475.60 L319.36 457.48 L327.54 457.48 L327.54 475.60 L335.72 475.60 L335.72 475.60 L343.90 475.60 L343.90 475.60 L352.08 475.60 L352.08 475.60 L360.26 475.60 L360.26 475.60 L368.44 475.60 L368.44 457.48 L376.62 457.48 L376.62 475.60 L384.80 475.60 L384.80 475.60 L392.98 475.60 L392.98 457.48 L401.16 457.48 L401.16 475.60 L409.34 475.60 L409.34 475.60 L417.52 475.60 L417.52 294.35 L425.70 294.35 L425.70 457.48 L433.88 457.48 L433.88 475.60 L442.06 475.60 L442.06 475.60 L450.24 475.60 L450.24 475.60 L458.42 475.60 L458.42 475.60 L466.60 475.60 L466.60 457.48 L474.78 457.48 L474.78 457.48 L482.96 457.48 L482.96 457.48 L491.14 457.48 L491.14 457.48 L499.32 457.48 L499.32 475.60 L507.50 475.60 L507.50 457.48 L515.68 457.48 L515.68 457.48 L523.86 457.48 L523.86 475.60 L532.04 475.60 L532.04 475.60 L540.22 475.60 L540.22 457.48 L548.40 457.48 L548.40 475.60 L556.58 475.60 L556.58 475.60 L564.76 475.60 L564.76 457.48 L572.94 457.48 L572.94 475.60 L581.12 475.60 L581.12 475.60 L589.30 475.60 L589.30 475.60 L597.48 475.60 L597.48 475.60 L605.66 475.60 L605.66 475.60 L613.84 475.60 L613.84 457.48 L622.02 457.48 L622.02 475.60 L630.20 475.60 L630.20 475.60 L638.38 475.60 L638.38 457.48 L646.56 457.48 L646.56 511.85 L655.60 511.85" fill="none" stroke="#6e7b89" stroke-width="2.6" stroke-linejoin="round"/><rect x="689" y="382" width="10" height="9" fill="url(#lg0)" shape-rendering="crispEdges"/><rect x="689" y="399" width="10" height="9" fill="url(#lg1)" shape-rendering="crispEdges"/><rect x="689" y="416" width="10" height="9" fill="url(#lg2)" shape-rendering="crispEdges"/><rect x="689" y="433" width="10" height="9" fill="url(#lg3)" shape-rendering="crispEdges"/><rect x="689" y="450" width="10" height="9" fill="url(#lg4)" shape-rendering="crispEdges"/><rect x="689" y="467" width="10" height="9" fill="url(#lg5)" shape-rendering="crispEdges"/><rect x="689" y="484" width="10" height="9" fill="url(#lg6)" shape-rendering="crispEdges"/><line x1="188.5" y1="595" x2="188.5" y2="616" stroke="#8a8a8a" stroke-width="1" /><path d="M193.8 603.6 L197.0 607.2 L200.2 603.6" fill="none" stroke="#111" stroke-width="1.5"/><line x1="708.0" y1="595" x2="708.0" y2="616" stroke="#8a8a8a" stroke-width="1" /><path d="M713.0 603.6 L716.2 607.2 L719.5 603.6" fill="none" stroke="#111" stroke-width="1.5"/>
</svg>
<div class="t" style="left:8px;top:6.10px;font-size:14px;color:#0f3558;font-weight:700;-webkit-text-stroke:0.35px #0f3558">ASH Analytics</div><div class="t" style="left:336px;top:8.83px;font-size:10.6px;color:#14303c;font-weight:400;-webkit-text-stroke:0.2px #14303c;">Save</div><div class="t" style="left:389px;top:8.83px;font-size:10.6px;color:#14303c;font-weight:400;-webkit-text-stroke:0.2px #14303c;">Page Refreshed</div><div class="t" style="left:473.5px;top:7.73px;font-size:11.8px;color:#1d3545;font-weight:700;">1:50:40 PM GMT-0600</div><div class="t" style="left:608px;top:8.56px;font-size:10.9px;color:#14303c;font-weight:400;-webkit-text-stroke:0.2px #14303c;">Auto Refresh</div><div class="t" style="left:692.8px;top:11.03px;font-size:10.6px;color:#14303c;font-weight:400;-webkit-text-stroke:0.2px #14303c;">15 Seconds</div><div class="t" style="left:6px;width:49px;text-align:center;top:40.34px;font-size:10.5px;color:#1a1a1a;-webkit-text-stroke:0.2px #1a1a1a;">Hour</div><div class="t" style="left:55px;width:44px;text-align:center;top:40.34px;font-size:10.5px;color:#1a1a1a;-webkit-text-stroke:0.2px #1a1a1a;">Day</div><div class="t" style="left:99px;width:54px;text-align:center;top:40.34px;font-size:10.5px;color:#1a1a1a;-webkit-text-stroke:0.2px #1a1a1a;">Week</div><div class="t" style="left:153px;width:55px;text-align:center;top:40.34px;font-size:10.5px;color:#1a1a1a;-webkit-text-stroke:0.2px #1a1a1a;">Month</div><div class="t" style="left:208px;width:70px;text-align:center;top:40.34px;font-size:10.5px;color:#1a1a1a;-webkit-text-stroke:0.2px #1a1a1a;">Calendar</div><div class="t" style="left:278px;width:62px;text-align:center;top:40.34px;font-size:10.5px;color:#1a1a1a;-webkit-text-stroke:0.2px #1a1a1a;">Custom</div><div class="t" style="right:765.7px;top:83.40px;font-size:10px;color:#15303f;letter-spacing:-0.2px;-webkit-text-stroke:0.3px #15303f;text-align:right">1.2</div><div class="t" style="right:765.7px;top:109.40px;font-size:10px;color:#15303f;letter-spacing:-0.2px;-webkit-text-stroke:0.3px #15303f;text-align:right">0.6</div><div class="t" style="right:765.7px;top:135.40px;font-size:10px;color:#15303f;letter-spacing:-0.2px;-webkit-text-stroke:0.3px #15303f;text-align:right">0</div><div class="t" style="left:67.40px;width:60px;text-align:center;top:151px;font-size:10px;color:#15303f;letter-spacing:-0.3px;-webkit-text-stroke:0.3px #15303f">12:55PM</div><div class="t" style="left:128.55px;width:60px;text-align:center;top:151px;font-size:10px;color:#15303f;letter-spacing:-0.3px;-webkit-text-stroke:0.3px #15303f">01:00PM</div><div class="t" style="left:189.70px;width:60px;text-align:center;top:151px;font-size:10px;color:#15303f;letter-spacing:-0.3px;-webkit-text-stroke:0.3px #15303f">01:05PM</div><div class="t" style="left:250.85px;width:60px;text-align:center;top:151px;font-size:10px;color:#15303f;letter-spacing:-0.3px;-webkit-text-stroke:0.3px #15303f">01:10PM</div><div class="t" style="left:312.00px;width:60px;text-align:center;top:151px;font-size:10px;color:#15303f;letter-spacing:-0.3px;-webkit-text-stroke:0.3px #15303f">01:15PM</div><div class="t" style="left:373.15px;width:60px;text-align:center;top:151px;font-size:10px;color:#15303f;letter-spacing:-0.3px;-webkit-text-stroke:0.3px #15303f">01:20PM</div><div class="t" style="left:434.30px;width:60px;text-align:center;top:151px;font-size:10px;color:#15303f;letter-spacing:-0.3px;-webkit-text-stroke:0.3px #15303f">01:25PM</div><div class="t" style="left:495.45px;width:60px;text-align:center;top:151px;font-size:10px;color:#15303f;letter-spacing:-0.3px;-webkit-text-stroke:0.3px #15303f">01:30PM</div><div class="t" style="left:556.60px;width:60px;text-align:center;top:151px;font-size:10px;color:#15303f;letter-spacing:-0.3px;-webkit-text-stroke:0.3px #15303f">01:35PM</div><div class="t" style="left:617.75px;width:60px;text-align:center;top:151px;font-size:10px;color:#15303f;letter-spacing:-0.3px;-webkit-text-stroke:0.3px #15303f">01:40PM</div><div class="t" style="left:678.90px;width:60px;text-align:center;top:151px;font-size:10px;color:#15303f;letter-spacing:-0.3px;-webkit-text-stroke:0.3px #15303f">01:45PM</div><div class="t" style="left:740.05px;width:60px;text-align:center;top:151px;font-size:10px;color:#15303f;letter-spacing:-0.3px;-webkit-text-stroke:0.3px #15303f">01:50PM</div><div class="t" style="left:8px;top:196.11px;font-size:10.3px;color:#14303c;font-weight:400;-webkit-text-stroke:0.2px #14303c;">Filters</div><div class="t" style="left:50px;top:195.46px;font-size:11px;color:#1d3545;font-weight:700;">None</div><div class="t" style="left:37px;top:229.06px;font-size:11px;color:#14303c;font-weight:400;-webkit-text-stroke:0.2px #14303c;">Activity</div><div class="t" style="left:115.5px;top:229.80px;font-size:10.2px;color:#14303c;font-weight:400;-webkit-text-stroke:0.2px #14303c;">Load Map</div><div class="t" style="left:10.6px;top:260.42px;font-size:10.4px;color:#14303c;font-weight:400;-webkit-text-stroke:0.2px #14303c;">Wait Class</div><div class="t" style="left:215.5px;top:260.22px;font-size:10.4px;color:#14303c;font-weight:400;-webkit-text-stroke:0.2px #14303c;">Show</div><div class="t" style="left:274px;top:258.68px;font-size:11.2px;color:#14303c;font-weight:400;-webkit-text-stroke:0.2px #14303c;">Total Activity</div><div class="t" style="left:370px;top:260.42px;font-size:10.4px;color:#14303c;font-weight:400;-webkit-text-stroke:0.2px #14303c;letter-spacing:-0.25px">CPU Cores</div><div class="t" style="right:781px;top:540.90px;font-size:9.9px;color:#0f2a3a;text-align:right;-webkit-text-stroke:0.25px #0f2a3a">0</div><div class="t" style="right:781px;top:511.90px;font-size:9.9px;color:#0f2a3a;text-align:right;-webkit-text-stroke:0.25px #0f2a3a">.4</div><div class="t" style="right:781px;top:482.90px;font-size:9.9px;color:#0f2a3a;text-align:right;-webkit-text-stroke:0.25px #0f2a3a">.8</div><div class="t" style="right:781px;top:453.90px;font-size:9.9px;color:#0f2a3a;text-align:right;-webkit-text-stroke:0.25px #0f2a3a">1.2</div><div class="t" style="right:781px;top:424.90px;font-size:9.9px;color:#0f2a3a;text-align:right;-webkit-text-stroke:0.25px #0f2a3a">1.6</div><div class="t" style="right:781px;top:395.90px;font-size:9.9px;color:#0f2a3a;text-align:right;-webkit-text-stroke:0.25px #0f2a3a">2</div><div class="t" style="right:781px;top:366.90px;font-size:9.9px;color:#0f2a3a;text-align:right;-webkit-text-stroke:0.25px #0f2a3a">2.4</div><div class="t" style="right:781px;top:337.90px;font-size:9.9px;color:#0f2a3a;text-align:right;-webkit-text-stroke:0.25px #0f2a3a">2.8</div><div class="t" style="right:781px;top:308.90px;font-size:9.9px;color:#0f2a3a;text-align:right;-webkit-text-stroke:0.25px #0f2a3a">3.2</div><div class="t" style="left:20.30px;width:80px;text-align:center;top:555.20px;font-size:9.9px;color:#0f2a3a;letter-spacing:-0.1px;-webkit-text-stroke:0.25px #0f2a3a">1:30:45 PM</div><div class="t" style="left:81.50px;width:80px;text-align:center;top:555.20px;font-size:9.9px;color:#0f2a3a;letter-spacing:-0.1px;-webkit-text-stroke:0.25px #0f2a3a">1:31:15 PM</div><div class="t" style="left:142.70px;width:80px;text-align:center;top:555.20px;font-size:9.9px;color:#0f2a3a;letter-spacing:-0.1px;-webkit-text-stroke:0.25px #0f2a3a">1:31:45 PM</div><div class="t" style="left:203.90px;width:80px;text-align:center;top:555.20px;font-size:9.9px;color:#0f2a3a;letter-spacing:-0.1px;-webkit-text-stroke:0.25px #0f2a3a">1:32:15 PM</div><div class="t" style="left:265.10px;width:80px;text-align:center;top:555.20px;font-size:9.9px;color:#0f2a3a;letter-spacing:-0.1px;-webkit-text-stroke:0.25px #0f2a3a">1:32:45 PM</div><div class="t" style="left:326.30px;width:80px;text-align:center;top:555.20px;font-size:9.9px;color:#0f2a3a;letter-spacing:-0.1px;-webkit-text-stroke:0.25px #0f2a3a">1:33:15 PM</div><div class="t" style="left:387.50px;width:80px;text-align:center;top:555.20px;font-size:9.9px;color:#0f2a3a;letter-spacing:-0.1px;-webkit-text-stroke:0.25px #0f2a3a">1:33:45 PM</div><div class="t" style="left:448.70px;width:80px;text-align:center;top:555.20px;font-size:9.9px;color:#0f2a3a;letter-spacing:-0.1px;-webkit-text-stroke:0.25px #0f2a3a">1:34:15 PM</div><div class="t" style="left:509.90px;width:80px;text-align:center;top:555.20px;font-size:9.9px;color:#0f2a3a;letter-spacing:-0.1px;-webkit-text-stroke:0.25px #0f2a3a">1:34:45 PM</div><div class="t" style="left:571.10px;width:80px;text-align:center;top:555.20px;font-size:9.9px;color:#0f2a3a;letter-spacing:-0.1px;-webkit-text-stroke:0.25px #0f2a3a">1:35:15 PM</div><div class="t" style="left:709.2px;top:380.20px;font-size:10.2px;color:#1d3545;font-weight:700;">Other</div><div class="t" style="left:709.2px;top:397.20px;font-size:10.2px;color:#1d3545;font-weight:700;">Configuration</div><div class="t" style="left:709.2px;top:414.20px;font-size:10.2px;color:#1d3545;font-weight:700;">Commit</div><div class="t" style="left:709.2px;top:431.20px;font-size:10.2px;color:#1d3545;font-weight:700;">Concurrency</div><div class="t" style="left:709.2px;top:448.20px;font-size:10.2px;color:#1d3545;font-weight:700;">System I/O</div><div class="t" style="left:709.2px;top:465.20px;font-size:10.2px;color:#1d3545;font-weight:700;">User I/O</div><div class="t" style="left:709.2px;top:482.20px;font-size:10.2px;color:#1d3545;font-weight:700;">CPU</div><div class="t" style="left:10.8px;top:599.12px;font-size:10.5px;color:#14303c;font-weight:400;-webkit-text-stroke:0.2px #14303c;">SQL ID</div><div class="t" style="left:215.3px;top:596.72px;font-size:10.5px;color:#14303c;font-weight:400;-webkit-text-stroke:0.2px #14303c;">By</div><div class="t" style="left:240.3px;top:596.72px;font-size:10.5px;color:#14303c;font-weight:400;-webkit-text-stroke:0.2px #14303c;">Wait Class</div><div class="t" style="left:302px;width:72px;text-align:center;top:599.30px;font-size:10.5px;color:#1a1a1a;-webkit-text-stroke:0.2px #1a1a1a">Tune SQL</div><div class="t" style="left:382px;width:135px;text-align:center;top:599.30px;font-size:10.5px;color:#1a1a1a;-webkit-text-stroke:0.2px #1a1a1a">Create SQL Tuning Set</div><div class="t" style="left:529.5px;top:599.12px;font-size:10.5px;color:#14303c;font-weight:400;-webkit-text-stroke:0.2px #14303c;">User Session</div><div class="t" style="left:734.4px;top:596.92px;font-size:10.5px;color:#14303c;font-weight:400;-webkit-text-stroke:0.2px #14303c;">By</div><div class="t" style="left:759.5px;top:596.92px;font-size:10.5px;color:#14303c;font-weight:400;-webkit-text-stroke:0.2px #14303c;">Wait Class</div><div class="box" style="left:6px;top:622px;width:510px;height:61px;border:1px solid #8c8c8c;border-bottom:0;overflow:hidden;background:#fff"><div class="box" style="left:0;top:0;width:510px;height:22px;background:linear-gradient(#f4f4f4,#ececec);border-bottom:1px solid #7f7f7f"></div><div class="box" style="left:39px;top:0;width:1px;height:22px;background:#8a8a8a"></div><div class="box" style="left:274px;top:0;width:1px;height:22px;background:#8a8a8a"></div><div class="box" style="left:39px;top:24px;width:1px;height:40px;background:#efefef"></div><div class="box" style="left:0;top:46px;width:510px;height:20px;background:#eeeeee"></div><div class="t" style="left:4px;top:5.30px;font-size:10.5px;color:#151515;-webkit-text-stroke:0.2px #151515">Sel...</div><div class="t" style="left:45px;top:5.30px;font-size:10.5px;color:#151515;-webkit-text-stroke:0.2px #151515">SQL ID</div><div class="t" style="left:281px;top:5.30px;font-size:10.9px;color:#151515;-webkit-text-stroke:0.2px #151515">Activity (Average Active Sessions)</div><div class="t" style="left:46px;top:28.30px;font-size:10.6px;color:#0a37a5;-webkit-text-stroke:0.2px #0a37a5">5a457c2y2wwm3</div><div class="t" style="left:46px;top:51.30px;font-size:10.6px;color:#0a37a5;-webkit-text-stroke:0.2px #0a37a5">0s8ggvj1hpb34</div><div class="box" style="left:13px;top:28px;width:12px;height:12px;border:1px solid #9a9a9a;border-right-color:#555;border-bottom-color:#555;background:linear-gradient(#fafafa 0,#fafafa 4px,#ececec 5px,#ececec 100%)"></div><div class="box" style="left:13px;top:51px;width:12px;height:12px;border:1px solid #9a9a9a;border-right-color:#555;border-bottom-color:#555;background:linear-gradient(#fafafa 0,#fafafa 4px,#ececec 5px,#ececec 100%)"></div><div class="box" style="left:275px;top:26px;width:160px;height:13.5px;background:linear-gradient(#77ee77 0,#33cc33 1px,#11dd11 4px,#00d400 9px,#007000 10px,#005e00 12.5px,#55dd55 13px)"></div><div class="box" style="left:435px;top:26px;width:39px;height:13.5px;background:linear-gradient(#a89070 0,#8a6a3a 10%,#7a5a2a 36%,#000 40%,#000 100%)"></div><div class="box" style="left:473.5px;top:26px;width:1.3px;height:13.5px;background:#1a3adf"></div><div class="t" style="left:479.5px;top:28.30px;font-size:10.5px;color:#151515;-webkit-text-stroke:0.2px #151515">1</div><div class="box" style="left:275px;top:49.5px;width:2px;height:13px;background:linear-gradient(#22cc22,#004400)"></div><div class="t" style="left:281.5px;top:51.30px;font-size:10.5px;color:#151515;-webkit-text-stroke:0.2px #151515">&lt;.01</div></div><div class="box" style="left:525px;top:622px;width:287px;height:61px;border:1px solid #8c8c8c;border-bottom:0;overflow:hidden;background:#fff"><div class="box" style="left:0;top:0;width:300px;height:22px;background:linear-gradient(#f4f4f4,#ececec);border-bottom:1px solid #7f7f7f"></div><div class="box" style="left:143px;top:0;width:1px;height:22px;background:#8a8a8a"></div><div class="box" style="left:143px;top:24px;width:1px;height:40px;background:#efefef"></div><div class="box" style="left:0;top:46px;width:300px;height:20px;background:#eeeeee"></div><div class="t" style="left:6px;top:5.30px;font-size:10.5px;color:#151515;-webkit-text-stroke:0.2px #151515">User Session</div><div class="t" style="left:151px;top:5.30px;font-size:10.9px;color:#151515;-webkit-text-stroke:0.2px #151515">Activity (Average Activ<span style="letter-spacing:2.2px">...</span></div><div class="t" style="left:7px;top:28.30px;font-size:10.6px;color:#0a37a5;-webkit-text-stroke:0.2px #0a37a5">1:19,4923</div><div class="t" style="left:7px;top:51.30px;font-size:10.6px;color:#0a37a5;-webkit-text-stroke:0.2px #0a37a5">1:88.1</div><div class="box" style="left:144px;top:26px;width:87px;height:13.5px;background:linear-gradient(#77ee77 0,#33cc33 1px,#11dd11 4px,#00d400 9px,#007000 10px,#005e00 12.5px,#55dd55 13px)"></div><div class="box" style="left:231px;top:26px;width:22px;height:13.5px;background:linear-gradient(#a89070 0,#8a6a3a 10%,#7a5a2a 36%,#000 40%,#000 100%)"></div><div class="box" style="left:252.5px;top:26px;width:1.3px;height:13.5px;background:#1a3adf"></div><div class="t" style="left:257.5px;top:28.30px;font-size:10.5px;color:#151515;-webkit-text-stroke:0.2px #151515">1</div><div class="box" style="left:144px;top:49.5px;width:6px;height:14px;background:linear-gradient(#66dd66 0,#22cc22 2px,#00cc00 6px,#007700 10px,#004400 100%)"></div><div class="t" style="left:154px;top:51.30px;font-size:10.5px;color:#151515;-webkit-text-stroke:0.2px #151515">.03</div></div>
<div id="frame"></div>
</body></html>
